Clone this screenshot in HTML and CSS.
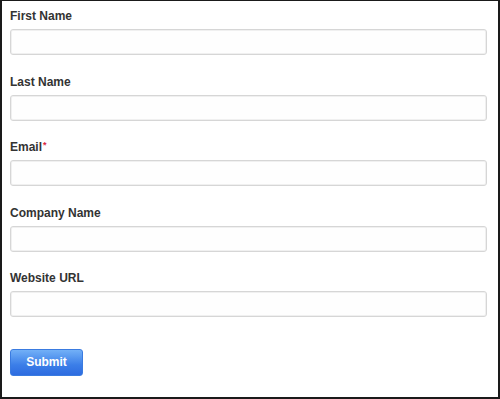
FILE: index.html
```html
<!DOCTYPE html>
<html>
<head>
<meta charset="utf-8">
<link rel="stylesheet" href="styles.css">
</head>
<body>
<form class="form">
  <div class="field">
    <label class="label">First Name</label>
    <input class="input" type="text">
  </div>
  <div class="field">
    <label class="label">Last Name</label>
    <input class="input" type="text">
  </div>
  <div class="field">
    <label class="label">Email<span class="req">*</span></label>
    <input class="input" type="text">
  </div>
  <div class="field">
    <label class="label">Company Name</label>
    <input class="input" type="text">
  </div>
  <div class="field">
    <label class="label">Website URL</label>
    <input class="input" type="text">
  </div>
  <div class="actions">
    <button class="submit" type="button">Submit</button>
  </div>
</form>
</body>
</html>
```

FILE: styles.css
```css
html, body {
  margin: 0;
  padding: 0;
  background: #fff;
}
.form {
  box-sizing: border-box;
  width: 500px;
  height: 399px;
  border-top: 1px solid #1a1a1a;
  border-left: 2px solid #1a1a1a;
  border-right: 2px solid #1a1a1a;
  border-bottom: 2px solid #1a1a1a;
  padding: 8px 11px 0 8px;
  display: flex;
  flex-direction: column;
  gap: 19.5px;
  font-family: "Liberation Sans", Arial, sans-serif;
}
.field {
  display: flex;
  flex-direction: column;
}
.label {
  font-size: 12px;
  font-weight: bold;
  line-height: 15px;
  color: #333;
  margin-bottom: 5px;
}
.req {
  color: #d9263c;
  font-size: 9px;
  vertical-align: top;
  line-height: 10px;
  margin-left: 1px;
}
.input {
  box-sizing: border-box;
  width: 100%;
  height: 26px;
  margin: 0;
  border: 1px solid #d6d6d6;
  border-radius: 3px;
  background: #fefefe;
  box-shadow: inset 0 0 0 1px #f0f0f0;
  outline: none;
}
.actions {
  margin-top: 12px;
}
.submit {
  box-sizing: border-box;
  width: 73px;
  height: 27px;
  border: 1px solid #3a7be0;
  border-radius: 3px;
  background: linear-gradient(#72b0f7, #3b7ee8 60%, #2e6ce0);
  color: #fff;
  font-family: "Liberation Sans", Arial, sans-serif;
  font-weight: bold;
  font-size: 12px;
  padding: 0;
}
```
